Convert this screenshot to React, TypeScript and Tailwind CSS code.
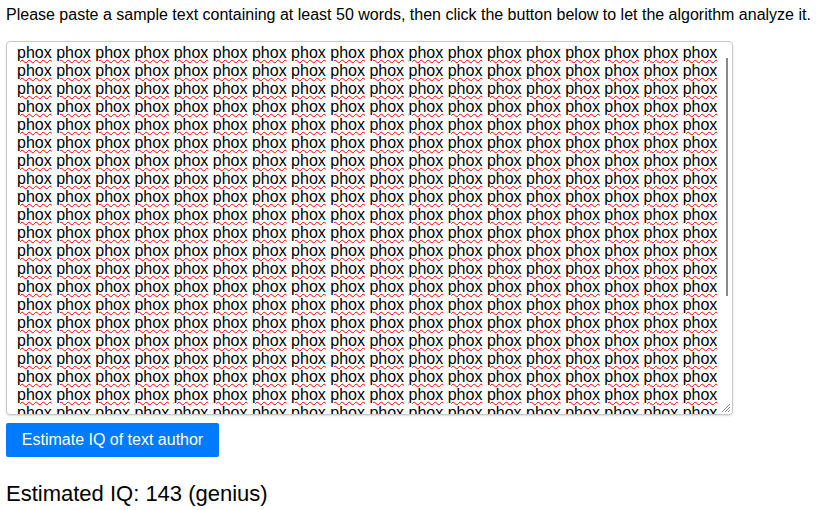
const words = Array(18).fill("phox");
const rows = Array(22).fill(words);

export default function App() {
  return (
    <div className="p-[6px] font-['Liberation_Sans',Arial,sans-serif] text-black bg-white min-h-[510px]">
      <p className="text-[16px] leading-[18px]">
        Please paste a sample text containing at least 50 words, then click the button below to let the algorithm analyze it.
      </p>

      {/* Text box */}
      <div className="relative mt-[17px] w-[727px] h-[374px] border border-[#c8c8c8] rounded-[4px] shadow-[0_1px_2px_rgba(0,0,0,0.15)] overflow-hidden">
        <div className="pl-[10px] pt-[2px] text-[16px] leading-[18px]">
          {rows.map((r, i) => (
            <div key={i} className="whitespace-nowrap">
              {r.map((w, j) => (
                <span key={j}>
                  <span className="underline decoration-wavy decoration-[#ff0000] decoration-[1px] underline-offset-[1px]">{w}</span>
                  {j < r.length - 1 ? " " : ""}
                </span>
              ))}
            </div>
          ))}
        </div>
        {/* scrollbar thumb */}
        <div className="absolute right-[4px] top-[16px] w-[2px] h-[238px] bg-[#8a8a8a]" />
        {/* resize grip */}
        <svg className="absolute right-[1px] bottom-[1px]" width="12" height="12" viewBox="0 0 12 12">
          <path d="M11 3 L3 11 M11 6 L6 11 M11 9 L9 11" stroke="#8a8a8a" strokeWidth="1" />
        </svg>
      </div>

      <button className="mt-[8px] h-[34px] w-[213px] bg-[#007bff] text-white text-[16px] rounded-[2px]">
        Estimate IQ of text author
      </button>

      <div className="mt-[24px] text-[22px] leading-[26px]">Estimated IQ: 143 (genius)</div>
    </div>
  );
}
